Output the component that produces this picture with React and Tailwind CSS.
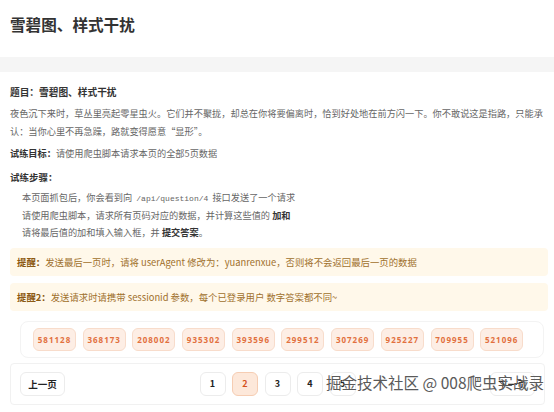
const numbers = ["581128", "368173", "208002", "935302", "393596", "299512", "307269", "925227", "709955", "521096"];

function PageButton({ label, active }) {
  return (
    <div
      className={
        "flex h-[24px] w-[26px] items-center justify-center rounded-[6px] border text-[9px] font-bold " +
        (active
          ? "border-[#f6cdb3] bg-[#fde8da] text-[#d4501c]"
          : "border-[#ececec] bg-white text-[#222]")
      }
    >
      {label}
    </div>
  );
}

export default function App() {
  return (
    <div
      className="relative h-[412px] w-[554px] overflow-hidden bg-white text-[#666]"
      style={{ fontFamily: '"Noto Sans CJK SC", "Noto Sans", sans-serif' }}
    >
      {/* page header */}
      <div className="h-[57px] pl-[10px] pt-[13px]">
        <h1 className="text-[15.6px] font-bold leading-[22px] text-[#333]">雪碧图、样式干扰</h1>
      </div>
      <div className="h-[15px] bg-[#f5f5f5]" />

      {/* question body */}
      <div className="pl-[10px] pr-[6px] pt-[11px]">
        <div className="text-[9.7px] font-bold leading-[18px] text-[#333]">题目：雪碧图、样式干扰</div>
        <p className="mt-[3px] text-[9.2px] leading-[18px]">
          夜色沉下来时，草丛里亮起零星虫火。它们并不聚拢，却总在你将要偏离时，恰到好处地在前方闪一下。你不敢说这是指路，只能承认：当你心里不再急躁，路就变得愿意“显形”。
        </p>
        <div className="mt-[4px] text-[9.2px] leading-[18px]">
          <span className="font-bold text-[#333]">试练目标：</span>请使用爬虫脚本请求本页的全部5页数据
        </div>
        <div className="mt-[6px] text-[9.5px] font-bold leading-[18px] text-[#333]">试练步骤：</div>
        <div className="mt-[3px] pl-[12px] text-[9.2px] leading-[17px]">
          <div>
            本页面抓包后，你会看到向{" "}
            <span className="px-[2px] text-[8px]" style={{ fontFamily: '"Liberation Mono", monospace' }}>
              /api/question/4
            </span>{" "}
            接口发送了一个请求
          </div>
          <div>
            请使用爬虫脚本，请求所有页码对应的数据，并计算这些值的 <span className="font-bold text-[#333]">加和</span>
          </div>
          <div>
            请将最后值的加和填入输入框，并 <span className="font-bold text-[#333]">提交答案</span>。
          </div>
        </div>

        {/* notices */}
        <div className="mt-[7px] flex h-[28px] items-center rounded-[4px] bg-[#fff8ea] pl-[7px] text-[9.4px] text-[#a0702c]">
          <span className="font-bold text-[#8c5a12]">提醒：</span>发送最后一页时，请将 userAgent 修改为：yuanrenxue，否则将不会返回最后一页的数据
        </div>
        <div className="mt-[7px] flex h-[28px] items-center rounded-[4px] bg-[#fff8ea] pl-[7px] text-[9.4px] text-[#a0702c]">
          <span className="font-bold text-[#8c5a12]">提醒2：</span>发送请求时请携带 sessionid 参数，每个已登录用户 数字答案都不同~
        </div>

        {/* page values */}
        <div className="ml-[10px] mr-[4px] mt-[10px] flex h-[37px] items-center gap-[6.7px] rounded-[8px] border border-[#f3f3f3] pl-[12px]">
          {numbers.map((n) => (
            <div
              key={n}
              className="flex h-[23px] w-[43px] items-center justify-center rounded-[6px] border border-[#f8dccb] bg-[#fdeee5] text-[8px] font-bold tracking-[1px] text-[#e2703e]"
              style={{ fontFamily: '"Open Sans", sans-serif' }}
            >
              {n}
            </div>
          ))}
        </div>

        {/* pagination */}
        <div className="mr-[3px] mt-[5px] flex h-[42px] items-center justify-between rounded-[4px] border border-[#f1f1f1] px-[9px]">
          <div className="flex h-[24px] w-[45px] items-center justify-center rounded-[6px] border border-[#ececec] text-[9.5px] font-bold text-[#222]">
            上一页
          </div>
          <div className="flex gap-[6.5px]">
            <PageButton label="1" />
            <PageButton label="2" active />
            <PageButton label="3" />
            <PageButton label="4" />
            <PageButton label="5" />
          </div>
          <div className="flex h-[24px] w-[45px] items-center justify-center rounded-[6px] border border-[#ececec] text-[9.5px] font-bold text-[#222]">
            下一页
          </div>
        </div>
      </div>

      {/* watermark */}
      <div
        className="absolute right-[10px] top-[371px] text-[15.5px] leading-[22px] text-[#5a5a5a]"
        style={{ textShadow: "0 0 1px #fff" }}
      >
        掘金技术社区 @ 008爬虫实战录
      </div>
    </div>
  );
}
